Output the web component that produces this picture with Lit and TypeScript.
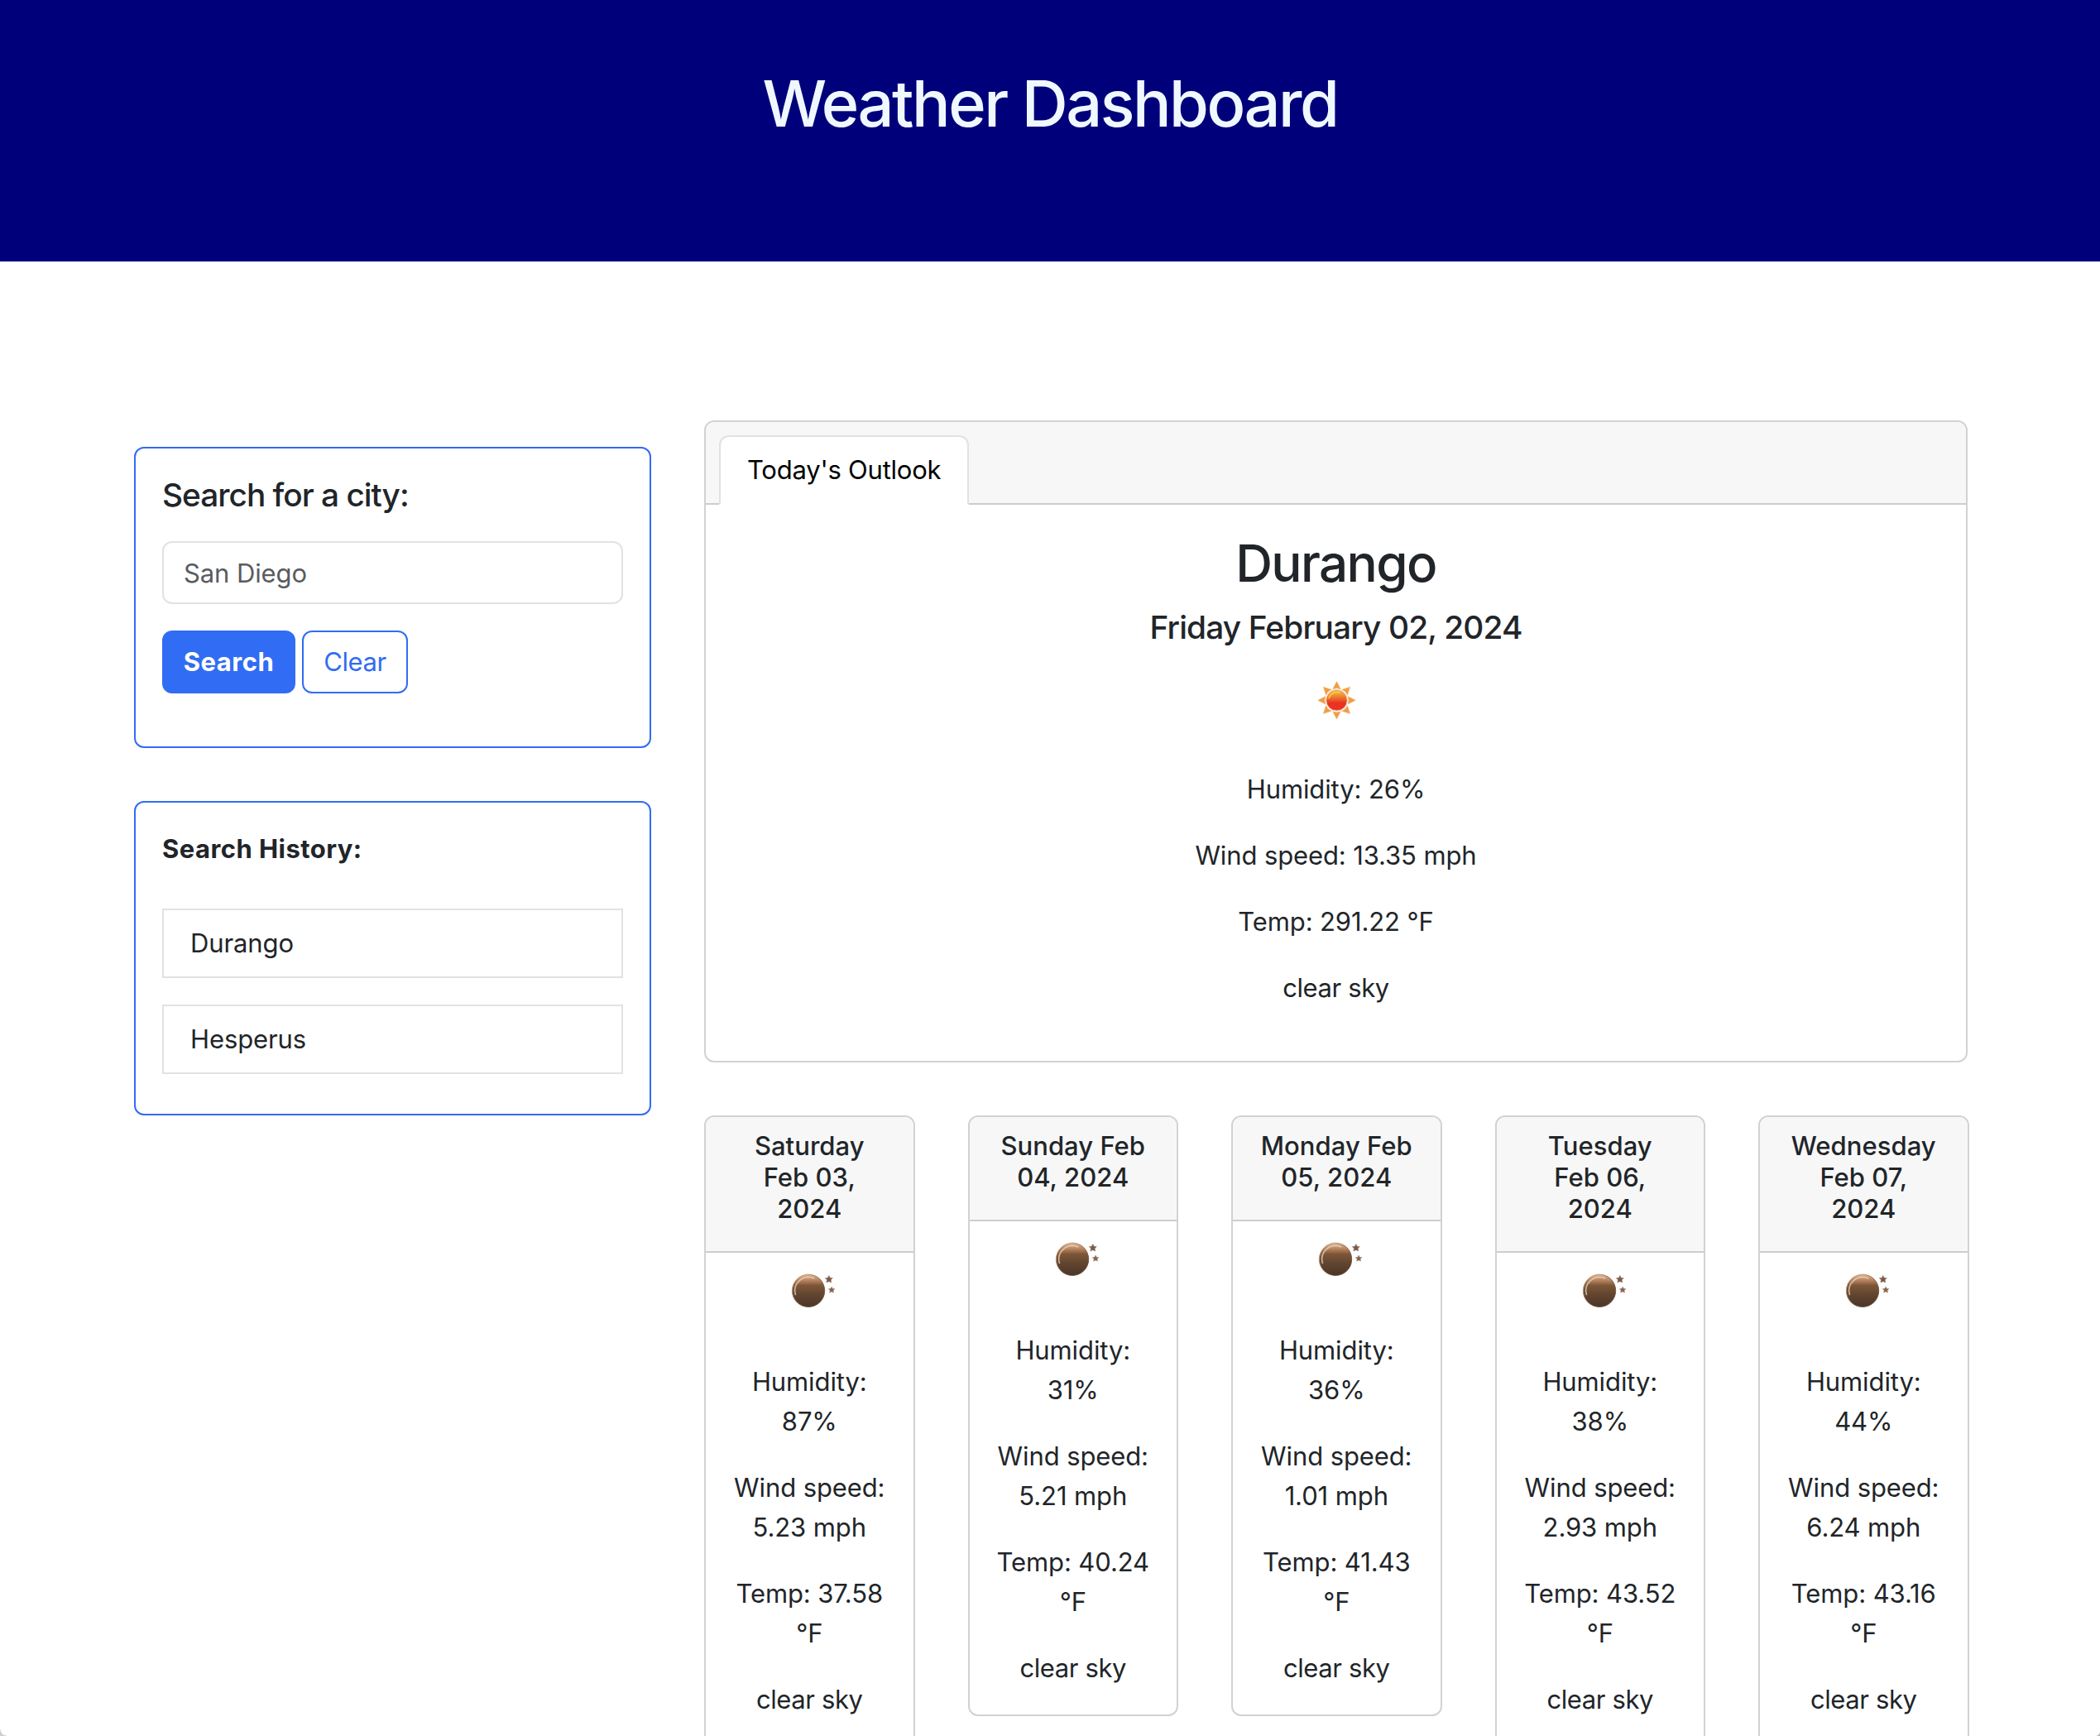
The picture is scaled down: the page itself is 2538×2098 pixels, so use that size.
import { LitElement, html, css, svg } from "lit";
import { customElement, property } from "lit/decorators.js";

interface Forecast {
  day: string;
  humidity: string;
  wind: string;
  temp: string;
}

const FORECAST: Forecast[] = [
  { day: "Saturday Feb 03, 2024", humidity: "87%", wind: "5.23", temp: "37.58" },
  { day: "Sunday Feb 04, 2024", humidity: "31%", wind: "5.21", temp: "40.24" },
  { day: "Monday Feb 05, 2024", humidity: "36%", wind: "1.01", temp: "41.43" },
  { day: "Tuesday Feb 06, 2024", humidity: "38%", wind: "2.93", temp: "43.52" },
  { day: "Wednesday Feb 07, 2024", humidity: "44%", wind: "6.24", temp: "43.16" },
];

const RAYS = [0, 45, 90, 135, 180, 225, 270, 315];

@customElement("weather-icon")
export class WeatherIcon extends LitElement {
  @property() kind: "sun" | "moon" = "sun";

  static styles = css`
    :host { display: block; width: 100px; height: 100px; }
    svg { display: block; width: 100px; height: 100px; }
  `;

  private sun() {
    return svg`
      <defs>
        <linearGradient id="disc" x1="0" y1="0" x2="0" y2="1">
          <stop offset="0" stop-color="#f0b040"></stop>
          <stop offset="0.22" stop-color="#f09a35"></stop>
          <stop offset="0.48" stop-color="#ea5a2b"></stop>
          <stop offset="0.62" stop-color="#e9341f"></stop>
          <stop offset="0.9" stop-color="#ea3323"></stop>
          <stop offset="1" stop-color="#e4573f"></stop>
        </linearGradient>
      </defs>
      ${RAYS.map(
        (a) => svg`<path d="M50.5 25.8 L55 34.6 Q50.5 32.6 46 34.6 Z" fill="#ef9a45" stroke="#f3b56c" stroke-width="1" stroke-linejoin="round" transform="rotate(${a} 50.5 48.3)"></path>`
      )}
      <circle cx="50.5" cy="48.3" r="12.8" fill="url(#disc)" stroke="#f6cdb4" stroke-width="1"></circle>
      <path d="M41.2 45.5 A10 10 0 0 1 54 39" fill="none" stroke="#f6cf4c" stroke-width="2" stroke-linecap="round" opacity="0.8"></path>`;
  }

  private moon() {
    const star = "M0 -4.6 L1.5 -1.7 L4.6 -1.4 L2.4 0.8 L3 4 L0 2.7 L-3 4 L-2.4 0.8 L-4.6 -1.4 L-1.5 -1.7 Z";
    return svg`
      <defs>
        <linearGradient id="ball" x1="0" y1="0" x2="0" y2="1">
          <stop offset="0" stop-color="#dcb592"></stop>
          <stop offset="0.18" stop-color="#b98560"></stop>
          <stop offset="0.34" stop-color="#7d5638"></stop>
          <stop offset="0.6" stop-color="#634630"></stop>
          <stop offset="1" stop-color="#4b3527"></stop>
        </linearGradient>
        <linearGradient id="rim" x1="0" y1="0" x2="1" y2="1">
          <stop offset="0" stop-color="#e6c6aa"></stop>
          <stop offset="0.5" stop-color="#8a6244"></stop>
          <stop offset="1" stop-color="#5b4130"></stop>
        </linearGradient>
      </defs>
      <circle cx="49" cy="45.8" r="19.7" fill="url(#ball)" stroke="url(#rim)" stroke-width="0.9"></circle>
      <path d="M33.4 50.5 A16.4 16.4 0 0 1 55.5 30.8" fill="none" stroke="#ead5c3" stroke-width="1.7" stroke-linecap="round" opacity="0.75"></path>
      <path d=${star} fill="#7b5a48" stroke="#a58a7a" stroke-width="0.6" transform="translate(73.8 32)"></path>
      <path d=${star} fill="#866350" stroke="#b09585" stroke-width="0.6" transform="translate(77.1 44.8) scale(0.84)"></path>`;
  }

  render() {
    return html`<svg viewBox="0 0 100 100" aria-hidden="true">${this.kind === "sun" ? this.sun() : this.moon()}</svg>`;
  }
}

@customElement("forecast-card")
export class ForecastCard extends LitElement {
  @property({ attribute: false }) data!: Forecast;

  static styles = css`
    :host {
      display: block; box-sizing: border-box; border: 2px solid #d2d2d2; border-radius: 12px;
      overflow: hidden; background: #fff; text-align: center;
    }
    .head { background: #f7f7f7; border-bottom: 2px solid #cdcdcd; padding: 16px 32px 32px; }
    .day { margin: 0; font-size: 31px; line-height: 38px; font-weight: 540; letter-spacing: 0.04px; }
    .body { padding: 0 32px 32px; display: flex; flex-direction: column; align-items: center; gap: 32px; }
    .line { margin: 0; }
    .sky { letter-spacing: -0.4px; }
  `;

  render() {
    const d = this.data;
    return html`
      <div class="head"><h6 class="day">${d.day}</h6></div>
      <div class="body">
        <weather-icon kind="moon"></weather-icon>
        <p class="line">Humidity: ${d.humidity}</p>
        <p class="line">Wind speed: ${d.wind} mph</p>
        <p class="line">Temp: ${d.temp} °F</p>
        <p class="line sky">clear sky</p>
      </div>`;
  }
}

@customElement("app-root")
export class AppRoot extends LitElement {
  static styles = css`
    :host {
      display: block; position: relative; width: 2538px; height: 2098px; overflow: hidden; background: #fff;
      color: #212529; font: 400 31px/48px Inter, "Liberation Sans", sans-serif; letter-spacing: -0.11px;
    }
    .banner { box-sizing: border-box; height: 316px; padding-top: 77px; background: #00007b; text-align: center; }
    .title { margin: 0; color: #f0f8ff; font-size: 77.5px; line-height: 96px; font-weight: 540; letter-spacing: -2.5px; }
    .page { display: flex; align-items: flex-start; gap: 64px; padding: 192px 158px 0 162px; }
    .side { width: 625px; flex: none; display: flex; flex-direction: column; gap: 64px; padding-top: 32px; }
    .panel { box-sizing: border-box; border: 2px solid #316cf4; border-radius: 12px; padding: 32px; }
    .search { height: 364px; }
    .history { height: 380px; }
    .label { margin: 0 0 32px; font-size: 38.8px; line-height: 48px; font-weight: 540; letter-spacing: -1px; }
    .field {
      display: block; box-sizing: border-box; width: 100%; height: 76px; padding: 12px 24px; border: 2px solid #dfe2e6;
      border-radius: 12px; background: #fff; font: inherit; letter-spacing: inherit; color: #212529; outline: none;
    }
    .field::placeholder { color: #595c5f; opacity: 1; }
    .actions { display: flex; gap: 8px; margin-top: 32px; }
    .btn {
      box-sizing: border-box; height: 76px; margin: 0; padding: 12px 0; border: 2px solid #316cf4; border-radius: 12px;
      font: inherit;
    }
    .go { width: 161px; background: #316cf4; color: #fff; font-weight: 700; letter-spacing: 0.5px; }
    .clear { width: 128px; background: #fff; color: #316cf4; letter-spacing: -0.4px; }
    .past { margin: 0 0 48px; font-weight: 700; letter-spacing: 0.45px; }
    .items { list-style: none; margin: 0; padding: 0; display: flex; flex-direction: column; gap: 32px; }
    .item { border: 2px solid #dfe2e6; padding: 16px 32px; }
    .main { flex: 1; min-width: 0; display: flex; flex-direction: column; gap: 64px; }
    .today { box-sizing: border-box; width: 1527px; border: 2px solid #d2d2d2; border-radius: 12px; overflow: hidden; }
    .tabs { display: flex; background: #f7f7f7; border-bottom: 2px solid #cdcdcd; padding: 16px 16px 0; }
    .tab {
      border: 2px solid #dfe2e6; border-bottom-color: #fff; border-radius: 12px 12px 0 0; background: #fff;
      color: #000; padding: 16px 32px; margin-bottom: -2px; letter-spacing: -0.23px;
    }
    .now { display: flex; flex-direction: column; align-items: center; padding: 32px 32px 64px; }
    .city { margin: 0 0 14px; font-size: 62px; line-height: 78px; font-weight: 540; letter-spacing: -1.65px; }
    .date { margin: 0 0 16px; font-size: 38.8px; line-height: 48px; font-weight: 540; letter-spacing: -0.85px; }
    .line { margin: 32px 0 0; }
    .sky { letter-spacing: -0.4px; }
    .week { display: grid; grid-template-columns: repeat(5, 254.5px); gap: 64px; align-items: start; }
    .corner { position: absolute; bottom: 0; }
    .left { left: 0; width: 8px; height: 8px; background: radial-gradient(circle at 100% 0, transparent 7px, #cfcfcf 8px); }
    .right { right: 0; width: 4px; height: 4px; background: radial-gradient(circle at 0 0, transparent 3px, #b0b0b0 4px); }
  `;

  render() {
    return html`
      <header class="banner"><h1 class="title">Weather Dashboard</h1></header>
      <div class="page">
        <aside class="side">
          <section class="panel search">
            <h5 class="label">Search for a city:</h5>
            <input class="field" type="text" placeholder="San Diego" />
            <div class="actions">
              <button class="btn go">Search</button>
              <button class="btn clear">Clear</button>
            </div>
          </section>
          <section class="panel history">
            <p class="past">Search History:</p>
            <ul class="items">
              <li class="item">Durango</li>
              <li class="item">Hesperus</li>
            </ul>
          </section>
        </aside>
        <main class="main">
          <section class="today">
            <div class="tabs"><div class="tab">Today's Outlook</div></div>
            <div class="now">
              <h2 class="city">Durango</h2>
              <h5 class="date">Friday February 02, 2024</h5>
              <weather-icon kind="sun"></weather-icon>
              <p class="line">Humidity: 26%</p>
              <p class="line">Wind speed: 13.35 mph</p>
              <p class="line">Temp: 291.22 °F</p>
              <p class="line sky">clear sky</p>
            </div>
          </section>
          <section class="week">${FORECAST.map((f) => html`<forecast-card .data=${f}></forecast-card>`)}</section>
        </main>
      </div>
      <div class="corner left"></div>
      <div class="corner right"></div>`;
  }
}
